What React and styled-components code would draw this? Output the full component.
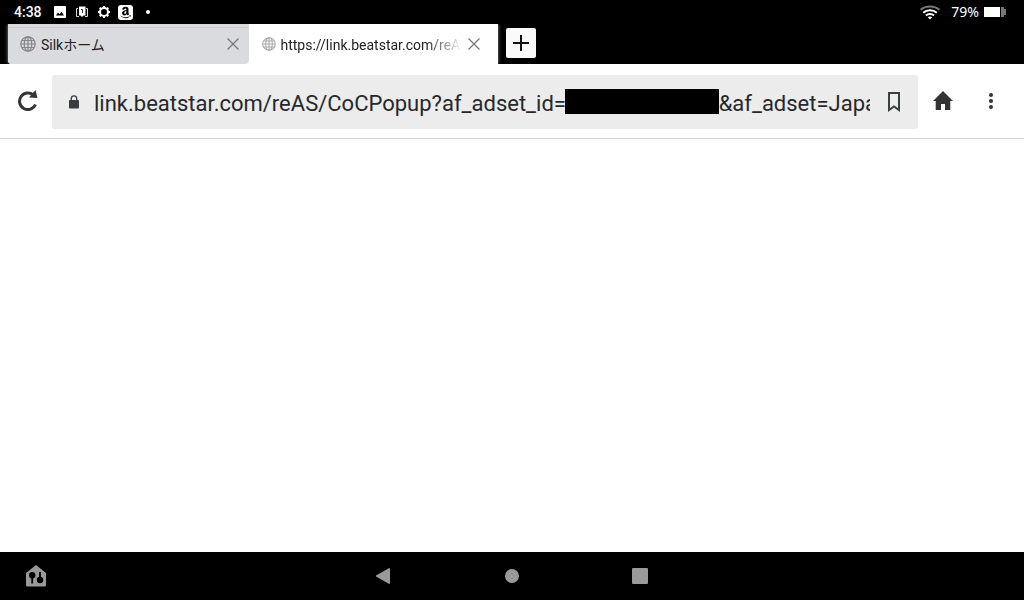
import React, { useState } from "react";
import styled, { createGlobalStyle } from "styled-components";
import { FaAmazon } from "react-icons/fa";

const GlobalStyle = createGlobalStyle`
  *, *::before, *::after { box-sizing: border-box; }
  body {
    margin: 0;
    background: #fff;
    color: #202124;
    font-family: Roboto, "Noto Sans CJK JP", sans-serif;
  }
  button, input { font: inherit; color: inherit; }
`;

const Screen = styled.div`
  min-height: 100vh;
  display: flex;
  flex-direction: column;
`;

const StatusBar = styled.header`
  display: flex;
  align-items: center;
  justify-content: space-between;
  height: 24px;
  padding: 0 18px 0 14px;
  background: #000;
  color: #fff;
  font-size: 14px;
  line-height: 24px;
`;

const StatusGroup = styled.div`
  display: flex;
  align-items: center;
  gap: ${(p) => p.$gap}px;
`;

const Clock = styled.time`
  margin-right: 2px;
  font-weight: 500;
`;

const Percent = styled.span`
  margin-left: 6px;
  font-family: "Noto Sans", sans-serif;
`;

const AmazonBadge = styled.span`
  display: flex;
  align-items: center;
  justify-content: center;
  width: 15px;
  height: 15px;
  margin-left: -2px;
  border-radius: 3px;
  background: #fff;
  color: #000;
`;

const MoreDot = styled.span`
  width: 4px;
  height: 4px;
  margin-left: 3px;
  border-radius: 50%;
  background: #fff;
`;

const TabStrip = styled.nav`
  display: flex;
  height: 40px;
  padding-left: 8px;
  background: #000;
`;

const TabList = styled.div`
  display: flex;
  flex: 0 1 490px;
  min-width: 0;
  background: #fff;
  border-radius: 0 2px 0 4px;
  box-shadow: -1px 0 3px #555, 1px 0 3px #555;
  clip-path: inset(0 -4px);
`;

const Tab = styled.div`
  display: flex;
  align-items: center;
  flex: 1 1 0;
  min-width: 0;
  padding: ${(p) => (p.$active ? "0 12px 0 13px" : "0 4px 0 12px")};
  background: ${(p) => (p.$active ? "#fff" : "#dadbdf")};
  box-shadow: ${(p) => (p.$active ? "none" : "inset 0 3px #dadbdf, inset 0 4px #cdced2")};
  border-radius: ${(p) => (p.$active ? "0" : "0 0 4px 4px")};
`;

const TabButton = styled.button`
  display: flex;
  align-items: center;
  flex: 1;
  gap: 5px;
  min-width: 0;
  height: 40px;
  padding: 0;
  border: 0;
  background: none;
  text-align: left;
`;

const TabTitle = styled.span`
  flex: 1;
  min-width: 0;
  padding-top: 2px;
  overflow: hidden;
  white-space: nowrap;
  font-size: 14px;
  line-height: 20px;
  color: #222;
  mask-image: ${(p) => (p.$fade ? "linear-gradient(to left, transparent, #000 36px)" : "none")};
`;

const IconButton = styled.button`
  display: flex;
  align-items: center;
  justify-content: center;
  flex: none;
  width: ${(p) => p.$width || 48}px;
  height: ${(p) => p.$height || 48}px;
  padding: 0;
  border: 0;
  background: none;
  color: ${(p) => p.$color || "#333537"};
`;

const NewTab = styled(IconButton)`
  margin: 4px 8px;
  border-radius: 2px;
  background: #fafafa;
`;

const Toolbar = styled.div`
  display: flex;
  align-items: center;
  height: 75px;
  padding: 0 9px 0 4px;
  border-bottom: 1px solid #d2d2d2;
  background: #fff;
`;

const AddressBar = styled.form`
  display: flex;
  align-items: center;
  flex: 1;
  min-width: 0;
  height: 54px;
  margin: 2px 1px 0 0;
  padding: 0 0 0 16px;
  border-radius: 3px;
  background: #ececec;
`;

const AddressField = styled.label`
  position: relative;
  display: flex;
  flex: 1;
  min-width: 0;
  margin-left: 14px;
`;

const AddressInput = styled.input`
  flex: 1;
  min-width: 0;
  height: 36px;
  padding: 2px 0 0;
  border: 0;
  outline: 0;
  background: none;
  font-size: 22px;
  line-height: 32px;
  color: #26282b;
`;

const Redaction = styled.span`
  position: absolute;
  top: 5px;
  left: 471px;
  width: 154px;
  height: 25px;
  background: #000;
`;

const Page = styled.main`
  flex: 1;
  background: #fff;
`;

const NavBar = styled.footer`
  display: grid;
  grid-template-columns: 1fr auto 1fr;
  align-items: center;
  height: 48px;
  padding: 0 12px;
  background: #000;
`;

const NavKeys = styled.div`
  display: flex;
  gap: 80px;
`;

const PictureIcon = () => (
  <svg width="12" height="12" viewBox="0 0 12 12" aria-hidden="true">
    <path fill="#fff" fillRule="evenodd" d="M1 0h10a1 1 0 0 1 1 1v10a1 1 0 0 1-1 1H1a1 1 0 0 1-1-1V1a1 1 0 0 1 1-1ZM2 9.5h8L7.5 5.8 5.5 8.3 4 6.5Z" />
  </svg>
);

const CardsIcon = () => (
  <svg width="12" height="12" viewBox="0 0 12 12" aria-hidden="true">
    <path fill="none" stroke="#ddd" d="M2 2.500H.5v8H3M10 2.500h1.500v8H9" />
    <path fill="#fff" d="M3 .5h6.500v9h-2L6 11 4.500 9.500H3Z" />
    <path fill="none" stroke="#333" d="M5 3.500h1.500V7" />
  </svg>
);

const GearIcon = () => (
  <svg width="12" height="12" viewBox="0 0 12 12" aria-hidden="true">
    <circle cx="6" cy="6" r="4" fill="none" stroke="#fff" strokeWidth="2" />
    <path stroke="#fff" strokeWidth="2" d="M6 0v2M6 10v2M0 6h2M10 6h2M1.700 1.700l1.500 1.500M8.800 8.800l1.500 1.500M1.700 10.300l1.500-1.500M8.800 3.200l1.500-1.500" />
  </svg>
);

const WifiIcon = () => (
  <svg width="20" height="15" viewBox="0 0 20 15" fill="none" strokeWidth="2" aria-hidden="true">
    <path stroke="#777" d="M.7 4.800C5.500.4 14.500.4 19.300 4.800" />
    <path stroke="#fff" d="M3.200 7.700c3.700-3.400 9.900-3.400 13.600 0M5.900 10.500c2.300-2.100 5.900-2.100 8.200 0" />
    <path fill="#fff" d="M7.800 12.300c1.200-1.100 3.200-1.100 4.400 0L10 14.500Z" />
  </svg>
);

const BatteryIcon = () => (
  <svg width="22" height="10" viewBox="0 0 22 10" aria-hidden="true">
    <path fill="#fff" d="M0 0h16v10H0Z" />
    <path fill="#777" d="M17 0h3v2h2v6h-2v2h-3Z" />
  </svg>
);

const GlobeIcon = ({ size = 16, color = "#85868a" }) => (
  <svg width={size} height={size} viewBox="0 0 16 16" fill="none" stroke={color} strokeWidth="1.200" aria-hidden="true">
    <circle cx="8" cy="8" r="7.200" />
    <ellipse cx="8" cy="8" rx="3.800" ry="7.200" />
    <path d="M8 .8v14.400M.8 8h14.400M2 4.500h12M2 11.500h12" />
  </svg>
);

const CloseIcon = () => (
  <svg width="12" height="12" viewBox="0 0 12 12" aria-hidden="true">
    <path stroke="#77797c" strokeWidth="1.300" d="m.5.5 11 11m0-11-11 11" />
  </svg>
);

const PlusIcon = () => (
  <svg width="16" height="16" viewBox="0 0 16 16" aria-hidden="true">
    <path stroke="#111" strokeWidth="2" d="M8 0v16M0 8h16" />
  </svg>
);

const ReloadIcon = () => (
  <svg width="20" height="22" viewBox="0 0 20 22" aria-hidden="true">
    <path fill="none" stroke="#333537" strokeWidth="3" d="M17.500 14.500A8.300 8.300 0 1 1 15.300 5" />
    <path fill="#333537" d="M17.500 0 19.500 8 11 7.500Z" />
  </svg>
);

const LockIcon = () => (
  <svg width="12" height="14" viewBox="0 0 12 14" aria-hidden="true">
    <rect x="1" y="5" width="10" height="8.500" rx="1" fill="#3a3c3f" />
    <path fill="none" stroke="#3a3c3f" strokeWidth="1.300" d="M3.300 5V3.500a2.700 2.700 0 0 1 5.400 0V5" />
  </svg>
);

const BookmarkIcon = () => (
  <svg width="12" height="20" viewBox="0 0 12 20" aria-hidden="true">
    <path fill="none" stroke="#3a3f42" strokeWidth="2" d="M1 1h10v17l-5-3.500L1 18Z" />
  </svg>
);

const HomeIcon = () => (
  <svg width="20" height="20" viewBox="0 0 20 20" aria-hidden="true">
    <path fill="#333" d="M10 0 20 10h-2.700v9H12v-6H8v6H2.700v-9H0Z" />
  </svg>
);

const DotsIcon = () => (
  <svg width="4" height="16" viewBox="0 0 4 16" fill="#333" aria-hidden="true">
    <circle cx="2" cy="2" r="2" />
    <circle cx="2" cy="8" r="2" />
    <circle cx="2" cy="14" r="2" />
  </svg>
);

const DashboardIcon = () => (
  <svg width="20" height="22" viewBox="0 0 20 22" aria-hidden="true">
    <path fill="#999" d="M10 0 20 8v12a1.500 1.500 0 0 1-1.500 1.500h-17A1.500 1.500 0 0 1 0 20V8Z" />
    <circle cx="6.200" cy="10.300" r="3.200" />
    <circle cx="14" cy="15" r="3.200" />
    <path stroke="#000" strokeWidth="1.800" d="M6.200 10v8.500M14 15V7" />
  </svg>
);

const BackIcon = () => (
  <svg width="16" height="16" viewBox="0 0 16 16" aria-hidden="true">
    <path fill="#999" d="M13.200 0 14 .5v15l-.8.500L0 8.500v-1Z" />
  </svg>
);

const CircleIcon = () => (
  <svg width="14" height="14" viewBox="0 0 14 14" aria-hidden="true">
    <circle cx="7" cy="7" r="7" fill="#999" />
  </svg>
);

const SquareIcon = () => (
  <svg width="16" height="16" viewBox="0 0 16 16" aria-hidden="true">
    <rect width="16" height="16" rx="1" fill="#999" />
  </svg>
);

const HIDDEN_ID = "\u00a0".repeat(28);
const PAGE_URL = `link.beatstar.com/reAS/CoCPopup?af_adset_id=${HIDDEN_ID}&af_adset=Japan`;

export default function App() {
  const [url, setUrl] = useState(PAGE_URL);
  return (
    <Screen>
      <GlobalStyle />
      <StatusBar>
        <StatusGroup $gap={10}>
          <Clock>4:38</Clock>
          <PictureIcon />
          <CardsIcon />
          <GearIcon />
          <AmazonBadge><FaAmazon size={13} /></AmazonBadge>
          <MoreDot />
        </StatusGroup>
        <StatusGroup $gap={5}>
          <WifiIcon />
          <Percent>79%</Percent>
          <BatteryIcon />
        </StatusGroup>
      </StatusBar>
      <TabStrip aria-label="Tabs">
        <TabList>
          <Tab>
            <TabButton type="button">
              <GlobeIcon />
              <TabTitle>Silkホーム</TabTitle>
            </TabButton>
            <IconButton type="button" aria-label="Close tab" $width={24} $height={40}><CloseIcon /></IconButton>
          </Tab>
          <Tab $active>
            <TabButton type="button">
              <GlobeIcon size={14} color="#aaa" />
              <TabTitle $fade>https://link.beatstar.com/reA</TabTitle>
            </TabButton>
            <IconButton type="button" aria-label="Close tab" $width={24} $height={40}><CloseIcon /></IconButton>
          </Tab>
        </TabList>
        <NewTab type="button" aria-label="New tab" $width={30} $height={30}><PlusIcon /></NewTab>
      </TabStrip>
      <Toolbar>
        <IconButton type="button" aria-label="Reload"><ReloadIcon /></IconButton>
        <AddressBar onSubmit={(e) => e.preventDefault()}>
          <LockIcon />
          <AddressField>
            <AddressInput
              type="text"
              aria-label="Address"
              spellCheck={false}
              value={url}
              onChange={(e) => setUrl(e.target.value)}
            />
            <Redaction />
          </AddressField>
          <IconButton type="button" aria-label="Bookmark"><BookmarkIcon /></IconButton>
        </AddressBar>
        <IconButton type="button" aria-label="Home"><HomeIcon /></IconButton>
        <IconButton type="button" aria-label="Menu"><DotsIcon /></IconButton>
      </Toolbar>
      <Page />
      <NavBar>
        <div><IconButton type="button" aria-label="Device dashboard"><DashboardIcon /></IconButton></div>
        <NavKeys>
          <IconButton type="button" aria-label="Back"><BackIcon /></IconButton>
          <IconButton type="button" aria-label="Home screen"><CircleIcon /></IconButton>
          <IconButton type="button" aria-label="Recent apps"><SquareIcon /></IconButton>
        </NavKeys>
      </NavBar>
    </Screen>
  );
}
